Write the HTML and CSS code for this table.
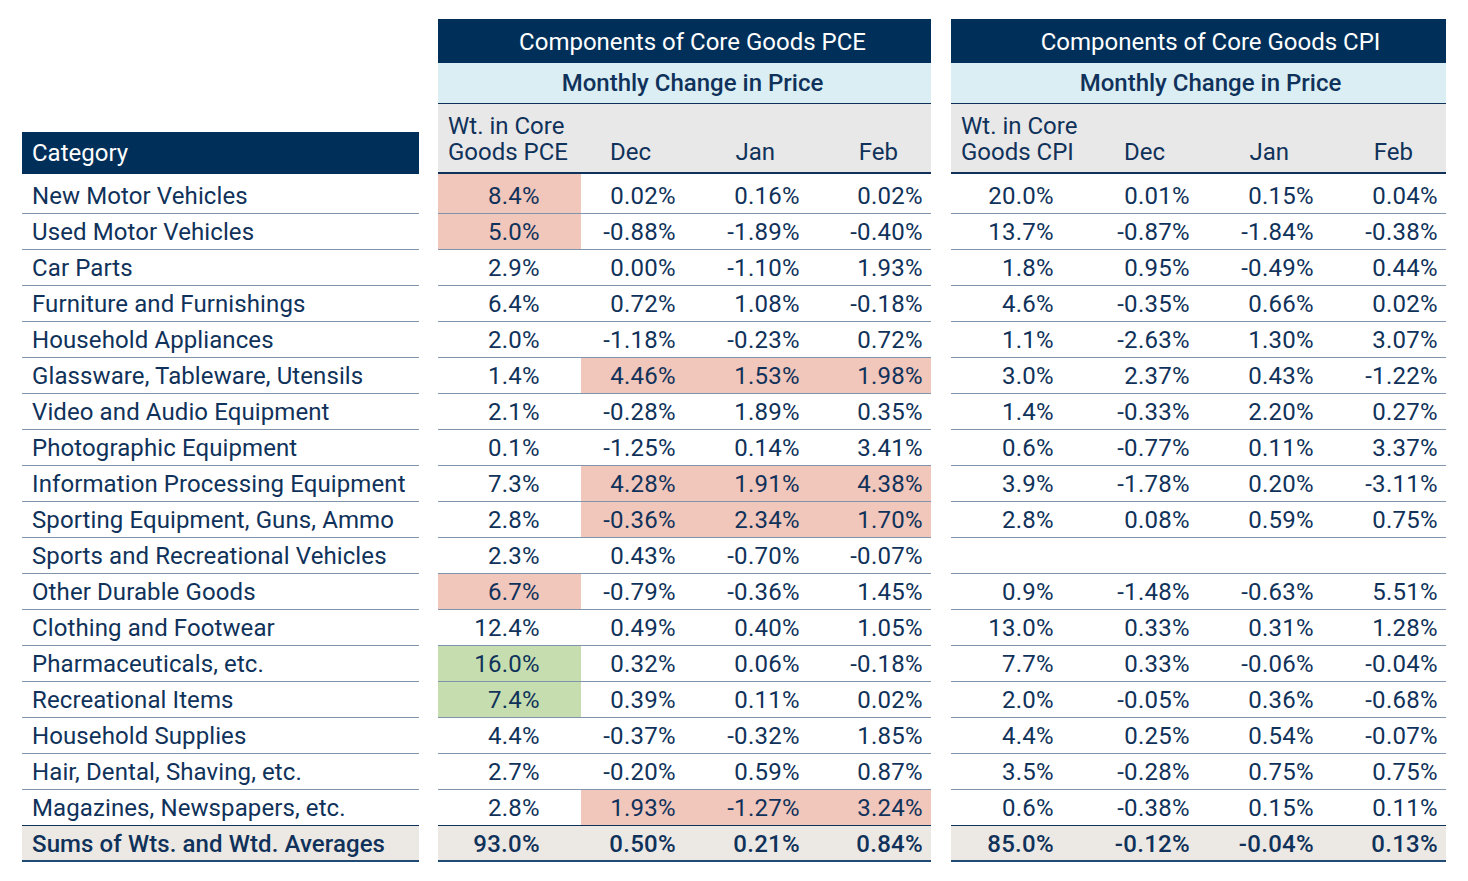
FILE: index.html
```html
<!DOCTYPE html>
<html lang="en">
<head>
<meta charset="utf-8">
<title>Components of Core Goods PCE and CPI</title>
<link rel="stylesheet" href="styles.css">
</head>
<body>
<div class="sheet">
  <div class="tbl cat">
    <div class="cat-head">Category</div>
    <div class="row first"><div class="c name">New Motor Vehicles</div></div>
    <div class="row"><div class="c name">Used Motor Vehicles</div></div>
    <div class="row"><div class="c name">Car Parts</div></div>
    <div class="row"><div class="c name">Furniture and Furnishings</div></div>
    <div class="row"><div class="c name">Household Appliances</div></div>
    <div class="row"><div class="c name">Glassware, Tableware, Utensils</div></div>
    <div class="row"><div class="c name">Video and Audio Equipment</div></div>
    <div class="row"><div class="c name">Photographic Equipment</div></div>
    <div class="row"><div class="c name">Information Processing Equipment</div></div>
    <div class="row"><div class="c name">Sporting Equipment, Guns, Ammo</div></div>
    <div class="row"><div class="c name">Sports and Recreational Vehicles</div></div>
    <div class="row"><div class="c name">Other Durable Goods</div></div>
    <div class="row"><div class="c name">Clothing and Footwear</div></div>
    <div class="row"><div class="c name">Pharmaceuticals, etc.</div></div>
    <div class="row"><div class="c name">Recreational Items</div></div>
    <div class="row"><div class="c name">Household Supplies</div></div>
    <div class="row"><div class="c name">Hair, Dental, Shaving, etc.</div></div>
    <div class="row last"><div class="c name">Magazines, Newspapers, etc.</div></div>
    <div class="row sum"><div class="c name">Sums of Wts. and Wtd. Averages</div></div>
  </div>

  <div class="tbl data pce">
    <div class="title">Components of Core Goods PCE</div>
    <div class="subtitle">Monthly Change in Price</div>
    <div class="row colhead">
      <div class="c wt">Wt. in Core<br>Goods PCE</div>
      <div class="c">Dec</div>
      <div class="c">Jan</div>
      <div class="c">Feb</div>
    </div>
    <div class="row first"><div class="c wt red">8.4%</div><div class="c">0.02%</div><div class="c">0.16%</div><div class="c">0.02%</div></div>
    <div class="row"><div class="c wt red">5.0%</div><div class="c">-0.88%</div><div class="c">-1.89%</div><div class="c">-0.40%</div></div>
    <div class="row"><div class="c wt">2.9%</div><div class="c">0.00%</div><div class="c">-1.10%</div><div class="c">1.93%</div></div>
    <div class="row"><div class="c wt">6.4%</div><div class="c">0.72%</div><div class="c">1.08%</div><div class="c">-0.18%</div></div>
    <div class="row"><div class="c wt">2.0%</div><div class="c">-1.18%</div><div class="c">-0.23%</div><div class="c">0.72%</div></div>
    <div class="row"><div class="c wt">1.4%</div><div class="c red">4.46%</div><div class="c red">1.53%</div><div class="c red">1.98%</div></div>
    <div class="row"><div class="c wt">2.1%</div><div class="c">-0.28%</div><div class="c">1.89%</div><div class="c">0.35%</div></div>
    <div class="row"><div class="c wt">0.1%</div><div class="c">-1.25%</div><div class="c">0.14%</div><div class="c">3.41%</div></div>
    <div class="row"><div class="c wt">7.3%</div><div class="c red">4.28%</div><div class="c red">1.91%</div><div class="c red">4.38%</div></div>
    <div class="row"><div class="c wt">2.8%</div><div class="c red">-0.36%</div><div class="c red">2.34%</div><div class="c red">1.70%</div></div>
    <div class="row"><div class="c wt">2.3%</div><div class="c">0.43%</div><div class="c">-0.70%</div><div class="c">-0.07%</div></div>
    <div class="row"><div class="c wt red">6.7%</div><div class="c">-0.79%</div><div class="c">-0.36%</div><div class="c">1.45%</div></div>
    <div class="row"><div class="c wt">12.4%</div><div class="c">0.49%</div><div class="c">0.40%</div><div class="c">1.05%</div></div>
    <div class="row"><div class="c wt green">16.0%</div><div class="c">0.32%</div><div class="c">0.06%</div><div class="c">-0.18%</div></div>
    <div class="row"><div class="c wt green">7.4%</div><div class="c">0.39%</div><div class="c">0.11%</div><div class="c">0.02%</div></div>
    <div class="row"><div class="c wt">4.4%</div><div class="c">-0.37%</div><div class="c">-0.32%</div><div class="c">1.85%</div></div>
    <div class="row"><div class="c wt">2.7%</div><div class="c">-0.20%</div><div class="c">0.59%</div><div class="c">0.87%</div></div>
    <div class="row last"><div class="c wt">2.8%</div><div class="c red">1.93%</div><div class="c red">-1.27%</div><div class="c red">3.24%</div></div>
    <div class="row sum"><div class="c wt">93.0%</div><div class="c">0.50%</div><div class="c">0.21%</div><div class="c">0.84%</div></div>
  </div>

  <div class="tbl data cpi">
    <div class="title">Components of Core Goods CPI</div>
    <div class="subtitle">Monthly Change in Price</div>
    <div class="row colhead">
      <div class="c wt">Wt. in Core<br>Goods CPI</div>
      <div class="c">Dec</div>
      <div class="c">Jan</div>
      <div class="c">Feb</div>
    </div>
    <div class="row first"><div class="c wt">20.0%</div><div class="c">0.01%</div><div class="c">0.15%</div><div class="c">0.04%</div></div>
    <div class="row"><div class="c wt">13.7%</div><div class="c">-0.87%</div><div class="c">-1.84%</div><div class="c">-0.38%</div></div>
    <div class="row"><div class="c wt">1.8%</div><div class="c">0.95%</div><div class="c">-0.49%</div><div class="c">0.44%</div></div>
    <div class="row"><div class="c wt">4.6%</div><div class="c">-0.35%</div><div class="c">0.66%</div><div class="c">0.02%</div></div>
    <div class="row"><div class="c wt">1.1%</div><div class="c">-2.63%</div><div class="c">1.30%</div><div class="c">3.07%</div></div>
    <div class="row"><div class="c wt">3.0%</div><div class="c">2.37%</div><div class="c">0.43%</div><div class="c">-1.22%</div></div>
    <div class="row"><div class="c wt">1.4%</div><div class="c">-0.33%</div><div class="c">2.20%</div><div class="c">0.27%</div></div>
    <div class="row"><div class="c wt">0.6%</div><div class="c">-0.77%</div><div class="c">0.11%</div><div class="c">3.37%</div></div>
    <div class="row"><div class="c wt">3.9%</div><div class="c">-1.78%</div><div class="c">0.20%</div><div class="c">-3.11%</div></div>
    <div class="row"><div class="c wt">2.8%</div><div class="c">0.08%</div><div class="c">0.59%</div><div class="c">0.75%</div></div>
    <div class="row"><div class="c wt"></div><div class="c"></div><div class="c"></div><div class="c"></div></div>
    <div class="row"><div class="c wt">0.9%</div><div class="c">-1.48%</div><div class="c">-0.63%</div><div class="c">5.51%</div></div>
    <div class="row"><div class="c wt">13.0%</div><div class="c">0.33%</div><div class="c">0.31%</div><div class="c">1.28%</div></div>
    <div class="row"><div class="c wt">7.7%</div><div class="c">0.33%</div><div class="c">-0.06%</div><div class="c">-0.04%</div></div>
    <div class="row"><div class="c wt">2.0%</div><div class="c">-0.05%</div><div class="c">0.36%</div><div class="c">-0.68%</div></div>
    <div class="row"><div class="c wt">4.4%</div><div class="c">0.25%</div><div class="c">0.54%</div><div class="c">-0.07%</div></div>
    <div class="row"><div class="c wt">3.5%</div><div class="c">-0.28%</div><div class="c">0.75%</div><div class="c">0.75%</div></div>
    <div class="row last"><div class="c wt">0.6%</div><div class="c">-0.38%</div><div class="c">0.15%</div><div class="c">0.11%</div></div>
    <div class="row sum"><div class="c wt">85.0%</div><div class="c">-0.12%</div><div class="c">-0.04%</div><div class="c">0.13%</div></div>
  </div>
</div>
</body>
</html>
```

FILE: styles.css
```css
html, body {
  margin: 0;
  padding: 0;
  background: #ffffff;
}

body {
  font-family: Roboto, "Liberation Sans", Arial, sans-serif;
  font-size: 24px;
  color: #10325a;
}

.sheet {
  display: flex;
  align-items: flex-end;
  padding: 19px 0 0 22px;
}

.tbl {
  display: flex;
  flex-direction: column;
}

.cat {
  width: 397px;
  margin-right: 19px;
}

.pce {
  width: 493px;
  margin-right: 20px;
}

.cpi {
  width: 495px;
}

.cat-head {
  height: 42px;
  background: #00305a;
  color: #ffffff;
  display: flex;
  align-items: center;
  padding: 0 0 0 10px;
  box-sizing: border-box;
}

.title {
  height: 44px;
  background: #00305a;
  color: #ffffff;
  display: flex;
  align-items: center;
  justify-content: center;
  box-sizing: border-box;
  padding: 1px 0 0 16px;
}

.subtitle {
  height: 40px;
  background: #daeef3;
  display: flex;
  align-items: center;
  justify-content: center;
  font-weight: 500;
  box-sizing: content-box;
  padding-left: 16px;
  border-bottom: 1px solid #10325a;
}

.cpi .title,
.cpi .subtitle {
  padding-left: 24px;
}

.row {
  display: grid;
  height: 36px;
  box-sizing: border-box;
  border-bottom: 1px solid #8094ab;
}

.cat .row {
  grid-template-columns: 1fr;
}

.pce .row {
  grid-template-columns: 143px 103px 124px 123px;
}

.cpi .row {
  grid-template-columns: 143px 104px 124px 124px;
}

.row.first {
  height: 40px;
}

.row.last {
  border-bottom-color: #10325a;
}

.row.sum {
  background: #ece9e5;
  border-bottom: 2px solid #1f4b75;
  font-weight: 500;
}

.c {
  display: flex;
  align-items: flex-end;
  justify-content: flex-end;
  padding: 0 8px 4px 0;
  line-height: 26px;
  white-space: nowrap;
  letter-spacing: 0.3px;
}

.sum .c {
  padding-bottom: 3px;
}

.c.wt {
  padding-right: 41px;
}

.cpi .c.wt {
  padding-right: 40px;
}

.c.name {
  justify-content: flex-start;
  padding-left: 10px;
  letter-spacing: 0.1px;
}

.red {
  background: #f1c6bb;
}

.green {
  background: #c6deaf;
}

.row.colhead {
  height: 70px;
  background: #e8e8e8;
  border-bottom: 2px solid #10325a;
}

.colhead .c {
  padding: 0 33px 7px 0;
  letter-spacing: 0;
}

.colhead .c.wt {
  justify-content: flex-start;
  padding: 0 0 7px 10px;
  text-align: left;
}
```
